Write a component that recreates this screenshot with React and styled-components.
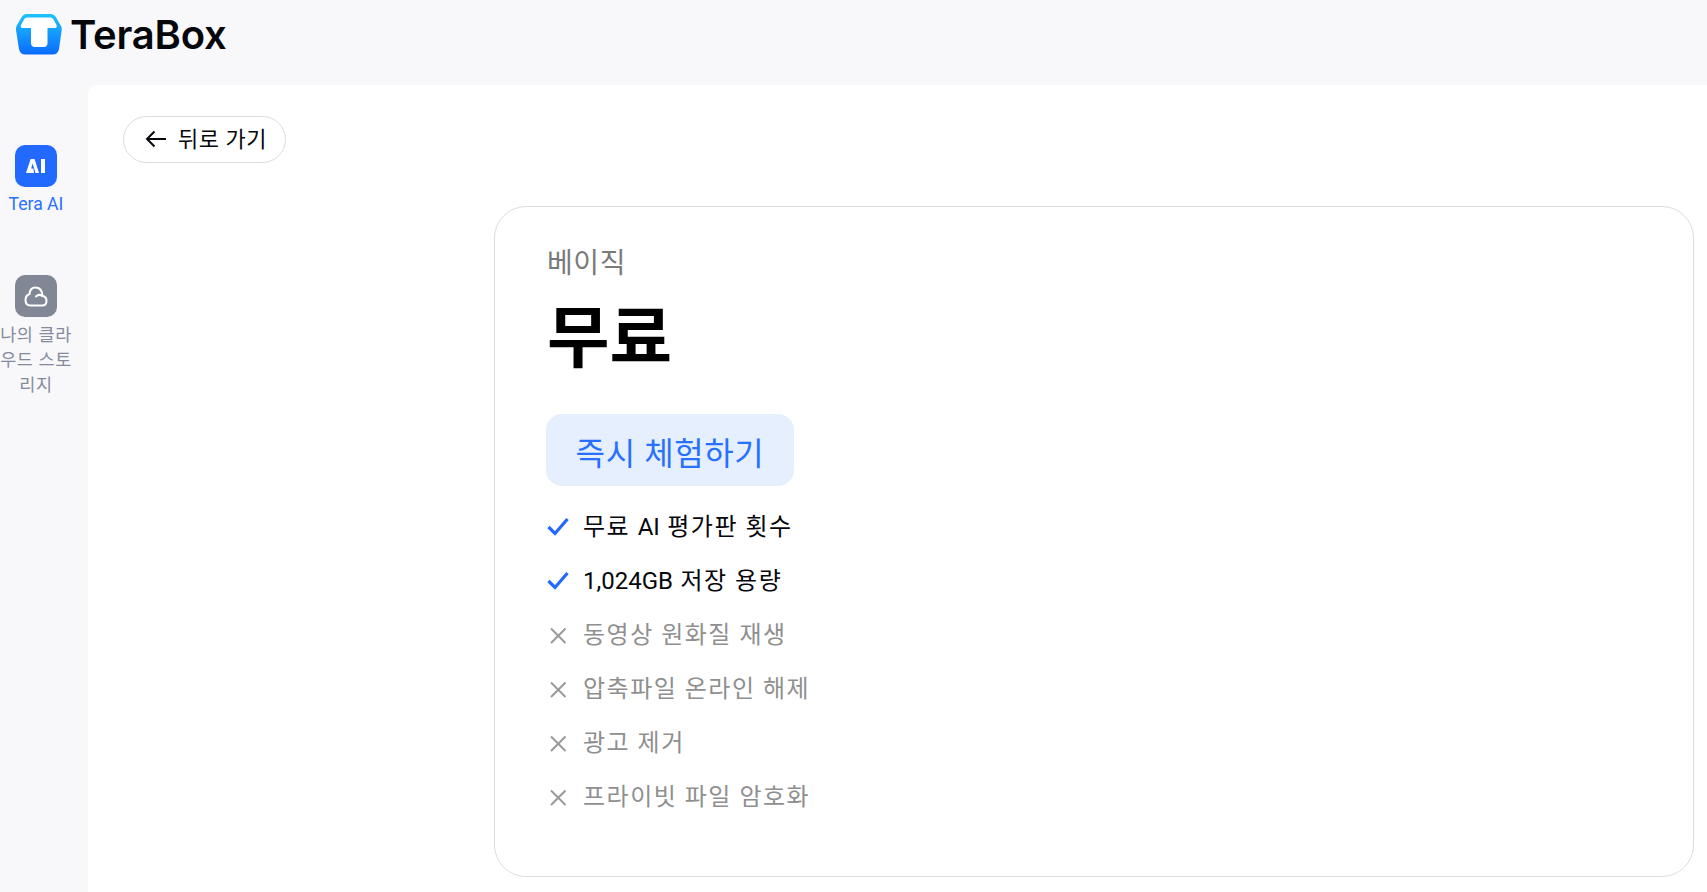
import React from "react";
import styled, { createGlobalStyle } from "styled-components";

const Global = createGlobalStyle`
  html, body { margin: 0; padding: 0; height: 100%; overflow: hidden; background: #f8f8fb; }
  body { font-family: Roboto, "Noto Sans CJK KR", sans-serif; }
  #root { height: 100%; }
`;

const Page = styled.div`
  display: flex;
  flex-direction: column;
  height: 892px;
  background: #f8f8fb;
  overflow: hidden;
`;
const Header = styled.header`
  height: 85px;
  flex: none;
  display: flex;
  align-items: flex-start;
  padding: 14px 0 0 15px;
  box-sizing: border-box;
  gap: 7px;
`;
const LogoText = styled.span`
  font-family: Inter, sans-serif;
  font-weight: 600;
  font-size: 40px;
  line-height: 42px;
  letter-spacing: -0.2px;
  color: #06070c;
`;
const Body = styled.div`
  flex: 1;
  display: flex;
  min-height: 0;
`;
const Sidebar = styled.nav`
  width: 72px;
  margin-right: 16px;
  flex: none;
  display: flex;
  flex-direction: column;
  align-items: center;
  padding: 60px 0 0;
  box-sizing: border-box;
  gap: 58px;
`;
const NavItem = styled.div`
  width: 72px;
  flex: none;
  display: flex;
  flex-direction: column;
  align-items: center;
  gap: ${p => (p.$active ? "5px" : "6px")};
  font-size: ${p => (p.$active ? "17.6px" : "17.5px")};
  letter-spacing: ${p => (p.$active ? "0" : "0.6px")};
  line-height: 25px;
  text-align: center;
  color: ${p => (p.$active ? "#2870ff" : "#858b9c")};
`;
const NavIcon = styled.div`
  width: 42px;
  height: 42px;
  border-radius: 10px;
  display: flex;
  align-items: center;
  justify-content: center;
  background: ${p => (p.$active ? "#2169ff" : "#828796")};
`;
const Main = styled.main`
  flex: 1;
  background: #fff;
  border-top-left-radius: 8px;
  padding: 31px 13px 0 35px;
  box-sizing: border-box;
  min-width: 0;
`;
const BackButton = styled.button`
  display: flex;
  align-items: center;
  gap: 11px;
  width: 163px;
  height: 47px;
  padding: 0 0 5px 21px;
  box-sizing: border-box;
  background: #fff;
  border: 1px solid #dcdcdc;
  border-radius: 24px;
  font-family: inherit;
  font-size: 22px;
  color: #06070c;
  letter-spacing: 0.5px;
`;
const BackArrow = styled.svg`
  width: 22px;
  height: 18px;
  flex: none;
  margin-top: 4px;
`;
const Card = styled.section`
  margin: 43px 0 0 371px;
  height: 671px;
  border: 1px solid #dcdde0;
  border-radius: 32px;
  padding: 39px 0 0 52px;
  box-sizing: border-box;
`;
const Tier = styled.div`
  font-size: 28px;
  letter-spacing: 0.6px;
  line-height: 36px;
  color: #7a7a7a;
`;
const Price = styled.h1`
  margin: 13px 0 0;
  font-size: 68px;
  line-height: 88px;
  font-weight: 700;
  color: #000;
`;
const TryButton = styled.button`
  display: block;
  margin-top: 31px;
  width: 248px;
  height: 72px;
  margin-left: -1px;
  border: none;
  border-radius: 16px;
  background: #e6effd;
  color: #2870ff;
  font-family: inherit;
  font-size: 32px;
  letter-spacing: 0.6px;
  padding: 2px 0 0;
`;
const Features = styled.ul`
  list-style: none;
  margin: 11px 0 0;
  padding: 0;
  display: flex;
  flex-direction: column;
`;
const Feature = styled.li`
  height: 54px;
  display: flex;
  align-items: center;
  gap: 12px;
  font-size: 24px;
  letter-spacing: 1.5px;
  color: ${p => (p.$on ? "#06070c" : "#8f8f8f")};
`;
const Latin = styled.span`
  letter-spacing: 0;
`;
const Mark = styled.svg`
  width: 24px;
  height: 24px;
  flex: none;
  position: relative;
  top: 3px;
  left: -1px;
`;

const Check = () => (
  <Mark viewBox="0 0 24 24" fill="none" stroke="#2169ff" strokeWidth="3.2">
    <path d="M2.5 12 L9 18.5 L21.5 4" />
  </Mark>
);
const Cross = () => (
  <Mark viewBox="0 0 24 24" fill="none" stroke="#999" strokeWidth="2">
    <path d="M5 5.5 L19.5 20 M19.5 5.5 L5 20" />
  </Mark>
);

const Logo = () => (
  <svg width="48" height="42" viewBox="0 0 48 42">
    <defs>
      <linearGradient id="lg" x1="0" y1="0" x2="0" y2="1">
        <stop offset="0" stopColor="#1fc4fb" />
        <stop offset="1" stopColor="#0a6bff" />
      </linearGradient>
    </defs>
    <path d="M11 0 H36 Q39 0 40.5 2.5 L46 12 Q47 14 46.7 16 L44 35 Q43 40.5 37.5 40.5 H10.5 Q5 40.5 4 35 L1 16 Q.7 14 1.5 12 L7 2.5 Q8.5 0 11 0 Z" fill="url(#lg)" />
    <path d="M12 3.5 H35.5 Q37.3 3.5 38.2 5 L41.5 11 Q42.5 13.5 40 14 H32.5 V29 Q32.5 33 28.5 33 H20 Q16 33 16 29 V14 H7.5 Q5 13.5 6 11 L9.3 5 Q10.2 3.5 12 3.5 Z" fill="#fff" />
  </svg>
);

export default function App() {
  return (
    <Page>
      <Global />
      <Header>
        <Logo />
        <LogoText>TeraBox</LogoText>
      </Header>
      <Body>
        <Sidebar>
          <NavItem $active>
            <NavIcon $active>
              <svg width="20" height="14" viewBox="0 0 20 14" fill="#fff">
                <path d="M4.6 0 H8.6 L13 14 H9.5 L6.6 4.5 L5.2 9.5 H7.4 L8 14 H0 Z" />
                <rect x="15" y="0" width="4" height="14" />
              </svg>
            </NavIcon>
            Tera AI
          </NavItem>
          <NavItem>
            <NavIcon>
              <svg width="24" height="21" viewBox="0 0 24 21" fill="none" stroke="#fff" strokeWidth="2" strokeLinecap="round">
                <path d="M12 10.5 Q15 7.5 18.5 10 M6.5 19.5 H18 Q22.5 19.5 22.5 15 Q22.5 10.5 18.5 10 Q18 1.5 11.5 1.5 Q6 1.5 5.5 8 Q1.5 9.5 1.5 14 Q1.5 19.5 6.5 19.5 Z" />
              </svg>
            </NavIcon>
            나의 클라우드 스토리지
          </NavItem>
        </Sidebar>
        <Main>
          <BackButton>
            <BackArrow viewBox="0 0 22 18" fill="none" stroke="#06070c" strokeWidth="2">
              <path d="M21 9 H2 M9.5 1.5 L2 9 L9.5 16.5" />
            </BackArrow>
            뒤로 가기
          </BackButton>
          <Card>
            <Tier>베이직</Tier>
            <Price>무료</Price>
            <TryButton>즉시 체험하기</TryButton>
            <Features>
              <Feature $on><Check /><span>무료 <Latin>AI</Latin> 평가판 횟수</span></Feature>
              <Feature $on><Check /><span><Latin>1,024GB</Latin> 저장 용량</span></Feature>
              <Feature><Cross />동영상 원화질 재생</Feature>
              <Feature><Cross />압축파일 온라인 해제</Feature>
              <Feature><Cross />광고 제거</Feature>
              <Feature><Cross />프라이빗 파일 암호화</Feature>
            </Features>
          </Card>
        </Main>
      </Body>
    </Page>
  );
}
